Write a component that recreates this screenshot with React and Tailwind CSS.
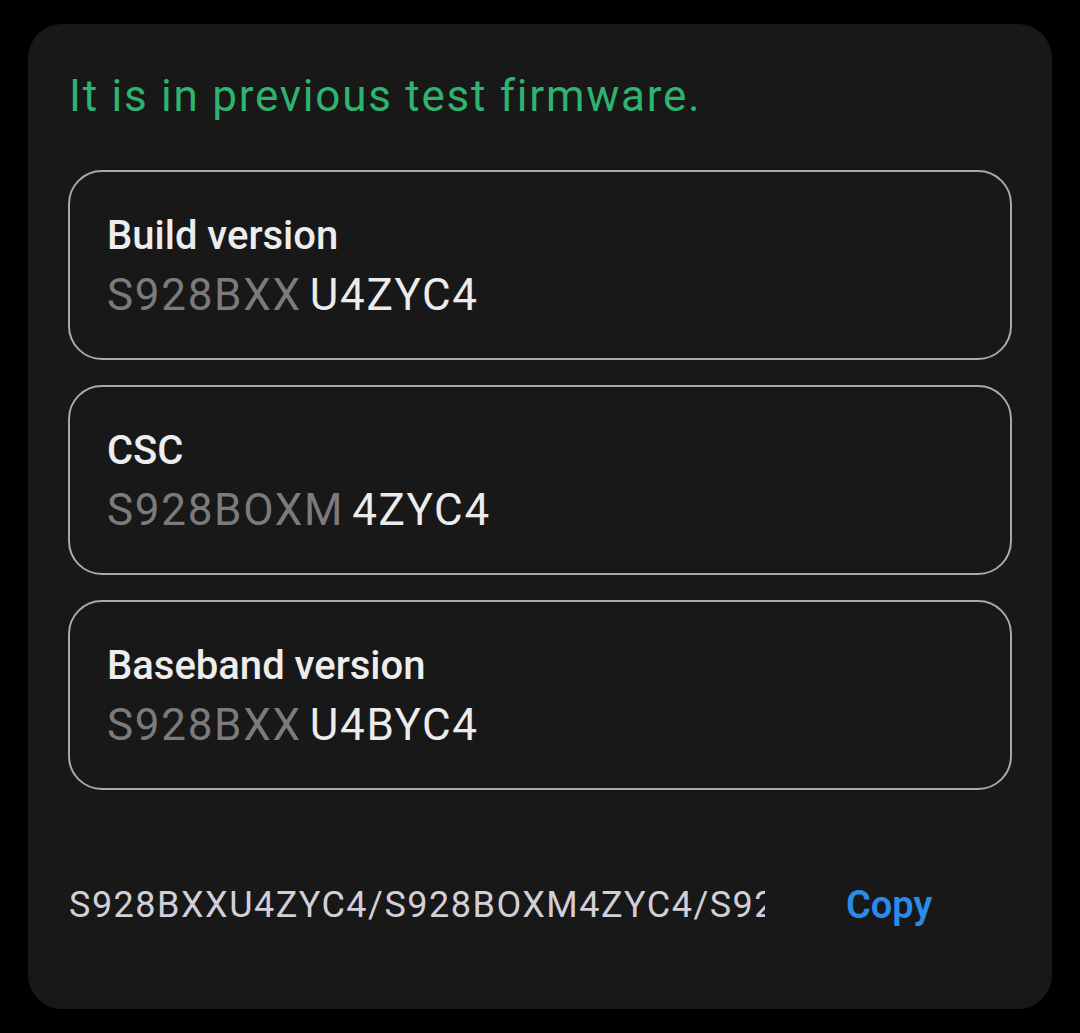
import React from "react";

const rows = [
  { label: "Build version", prefix: "S928BXX", rest: "U4ZYC4" },
  { label: "CSC", prefix: "S928BOXM", rest: "4ZYC4" },
  { label: "Baseband version", prefix: "S928BXX", rest: "U4BYC4" },
];

export default function App() {
  return (
    <div
      className="w-[1080px] h-[1033px] bg-black pt-[24px] px-[28px]"
      style={{ fontFamily: "Roboto, 'Noto Sans', sans-serif" }}
    >
      <div className="h-[985px] bg-[#181818] rounded-[34px] px-[40px] pt-[46px]">
        <p className="text-[44px] leading-[52px] tracking-[1.75px] text-[#2eb46f] pl-[1px]">
          It is in previous test firmware.
        </p>

        {/* firmware rows */}
        <div className="mt-[48px] flex flex-col gap-[25px]">
          {rows.map((row) => (
            <div
              key={row.label}
              className="h-[190px] border-2 border-[#a9a9a9] rounded-[34px] pl-[37px] pt-[40px]"
            >
              <div className="text-[40px] leading-[48px] font-medium text-[#ededed]">
                {row.label}
              </div>
              <div className="mt-[9px] text-[44px] leading-[52px] tracking-[1.7px] flex">
                <span className="text-[#7b7b7b]">{row.prefix}</span>
                <span className="text-[#ececee] ml-[8px]">{row.rest}</span>
              </div>
            </div>
          ))}
        </div>

        {/* combined string + copy */}
        <div className="mt-[93px] flex items-center">
          <div className="w-[697px] overflow-hidden whitespace-nowrap text-[36px] leading-[44px] tracking-[1.5px] text-[#d3cfd8] pl-[1px]">
            S928BXXU4ZYC4/S928BOXM4ZYC4/S928BXXU4BYC4
          </div>
          <button className="ml-[81px] text-[38px] leading-[44px] font-semibold text-[#2a8be8]">
            Copy
          </button>
        </div>
      </div>
    </div>
  );
}
